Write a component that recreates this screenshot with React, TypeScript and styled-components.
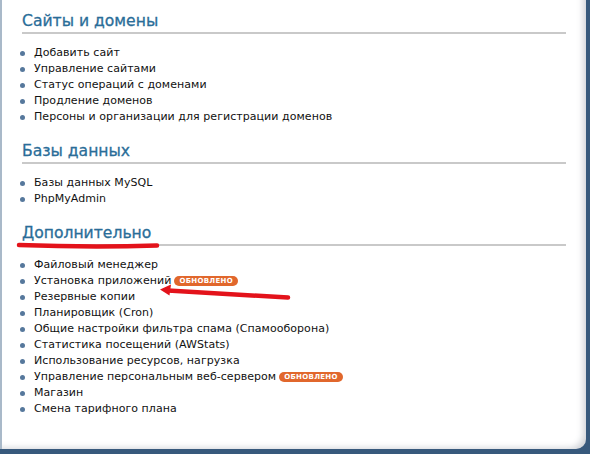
import React from 'react';
import styled, { createGlobalStyle } from 'styled-components';

const GlobalStyle = createGlobalStyle`
  html, body {
    margin: 0;
    padding: 0;
    background: #37597c;
  }
`;

const Frame = styled.div`
  position: relative;
  width: 590px;
  height: 454px;
  background: #37597c;
  overflow: hidden;
`;

const Panel = styled.div`
  box-sizing: border-box;
  width: 586px;
  height: 449px;
  background: #fff;
  border-left: 2px solid #a9b9c9;
  border-bottom-right-radius: 10px;
  box-shadow: inset -7px -5px 6px -4px rgba(90, 100, 120, 0.28);
  padding: 12px 20px 0 20px;
  font-family: 'DejaVu Sans', Verdana, sans-serif;
`;

const Section = styled.section`
  & + & {
    margin-top: 17px;
  }
`;

const Heading = styled.h2`
  margin: 0;
  font-size: 15.6px;
  line-height: 18px;
  font-weight: normal;
  color: #2a6d98;
  padding: 0 0 2px 0;
  border-bottom: 2px solid #c9c9c9;
  -webkit-text-stroke: 0.3px #2a6d98;
`;

const List = styled.ul`
  list-style: none;
  margin: 11px 0 0 0;
  padding: 0;
`;

const Item = styled.li`
  display: flex;
  align-items: center;
  height: 16px;
  font-size: 11px;
  line-height: 16px;
  letter-spacing: 0.05px;
  color: #111;

  &::before {
    content: '';
    width: 5px;
    height: 5px;
    border-radius: 50%;
    background: #56789c;
    margin: 1px 9px 0 -2px;
    flex-shrink: 0;
  }
`;

const Badge = styled.span`
  display: inline-flex;
  align-items: center;
  height: 10px;
  margin-left: 3px;
  padding: 0 5px;
  border-radius: 5px;
  background: #e1672c;
  color: #fff;
  font-size: 7px;
  font-weight: bold;
  letter-spacing: 0.3px;
  line-height: 10px;
`;

const Annotations = styled.svg`
  position: absolute;
  left: 0;
  top: 0;
  pointer-events: none;
`;

type Entry = { label: string; updated?: boolean };

const sections: { title: string; items: Entry[] }[] = [
  {
    title: 'Сайты и домены',
    items: [
      { label: 'Добавить сайт' },
      { label: 'Управление сайтами' },
      { label: 'Статус операций с доменами' },
      { label: 'Продление доменов' },
      { label: 'Персоны и организации для регистрации доменов' },
    ],
  },
  {
    title: 'Базы данных',
    items: [{ label: 'Базы данных MySQL' }, { label: 'PhpMyAdmin' }],
  },
  {
    title: 'Дополнительно',
    items: [
      { label: 'Файловый менеджер' },
      { label: 'Установка приложений', updated: true },
      { label: 'Резервные копии' },
      { label: 'Планировщик (Cron)' },
      { label: 'Общие настройки фильтра спама (Спамооборона)' },
      { label: 'Статистика посещений (AWStats)' },
      { label: 'Использование ресурсов, нагрузка' },
      { label: 'Управление персональным веб-сервером', updated: true },
      { label: 'Магазин' },
      { label: 'Смена тарифного плана' },
    ],
  },
];

export default function App() {
  return (
    <>
      <GlobalStyle />
      <Frame>
        <Panel>
          {sections.map((s) => (
            <Section key={s.title}>
              <Heading>{s.title}</Heading>
              <List>
                {s.items.map((it) => (
                  <Item key={it.label}>
                    {it.label}
                    {it.updated && <Badge>ОБНОВЛЕНО</Badge>}
                  </Item>
                ))}
              </List>
            </Section>
          ))}
        </Panel>

        {/* red marker annotations drawn over the page */}
        <Annotations width="590" height="454" viewBox="0 0 590 454">
          <path
            d="M19 245 Q 90 247.5 157 245.5"
            stroke="#e3131b"
            strokeWidth="4.5"
            strokeLinecap="round"
            fill="none"
          />
          <path
            d="M288 297.5 L 168 290.5"
            stroke="#e3131b"
            strokeWidth="4.5"
            strokeLinecap="round"
            fill="none"
          />
          <path d="M160 289.5 L 171 284.5 L 169.5 295.5 Z" fill="#e3131b" />
        </Annotations>
      </Frame>
    </>
  );
}
